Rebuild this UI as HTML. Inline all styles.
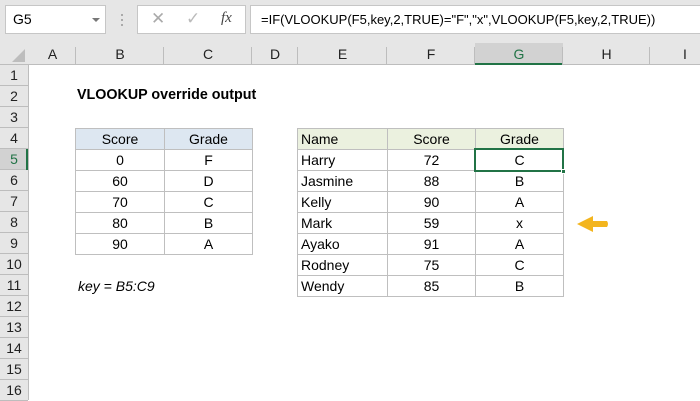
<!DOCTYPE html>
<html><head><style>
*{margin:0;padding:0;box-sizing:border-box}
body{width:700px;height:400px;overflow:hidden;background:#fff;font-family:"Liberation Sans",sans-serif;font-size:14px;color:#000;position:relative}
.a{position:absolute}
.c{position:absolute;display:flex;align-items:center;justify-content:center;font-size:14px}
</style></head><body>
<div class="a" style="left:0;top:0;width:700px;height:43px;background:#e6e6e6"></div>
<div class="a" style="left:5px;top:5px;width:101px;height:29px;background:#fff;border:1px solid #c6c6c6"></div>
<div class="a" style="left:13px;top:11px;font-size:14px">G5</div>
<div class="a" style="left:92px;top:18px;width:0;height:0;border-left:4px solid transparent;border-right:4px solid transparent;border-top:4px solid #777"></div>
<div class="a" style="left:121px;top:14px;width:2px;height:2px;background:#aaa;box-shadow:0 5px #aaa,0 10px #aaa"></div>
<div class="a" style="left:137px;top:5px;width:109px;height:29px;background:#fff;border:1px solid #c6c6c6"></div>
<div class="a" style="left:151px;top:9px;color:#aaa;font-size:17px">✕</div>
<div class="a" style="left:186px;top:9px;color:#bbb;font-size:17px">✓</div>
<div class="a" style="left:221px;top:10px;font-family:'Liberation Serif',serif;font-style:italic;font-size:15px;color:#444">fx</div>
<div class="a" style="left:250px;top:5px;width:460px;height:29px;background:#fff;border:1px solid #c6c6c6"></div>
<div class="a" style="left:261px;top:12px;font-size:13px">=IF(VLOOKUP(F5,key,2,TRUE)="F","x",VLOOKUP(F5,key,2,TRUE))</div>
<div class="a" style="left:0;top:43px;width:700px;height:22px;background:#e6e6e6;border-bottom:1px solid #bdbdbd"></div>
<div class="a" style="left:28px;top:65px;width:1px;height:335px;background:#bdbdbd"></div>
<div class="a" style="left:0;top:65px;width:28px;height:335px;background:#e6e6e6"></div>
<div class="a" style="left:12px;top:49px;width:0;height:0;border-left:13px solid transparent;border-bottom:13px solid #bdbdbd"></div>
<div class="a" style="left:475px;top:43px;width:88px;height:22px;background:#d2d2d2;border-bottom:2px solid #217346"></div>
<div id="cols"></div>
<div id="rows"></div>
<div id="cells"></div>
<div class="a" style="left:77px;top:87px;font-weight:bold;font-size:14.3px">VLOOKUP override output</div>
<div class="a" style="left:78px;top:278px;font-style:italic">key = B5:C9</div>
<div class="a" style="left:474px;top:148px;width:90px;height:24px;border:2px solid #217346"></div>
<div class="a" style="left:561px;top:169px;width:5px;height:5px;background:#217346;border:1px solid #fff"></div>
<svg class="a" style="left:575px;top:214px" width="36" height="20"><path d="M2 10 L18 2 L18 7 L32 7 Q34 10 32 13 L18 13 L18 18 Z" fill="#f3b51e"/></svg>
<script>
var cx=[29,76,164,252,298,387,475,563,650,720],nm="ABCDEFGHI",h="";
for(var i=0;i<9;i++){h+='<div class="c" style="left:'+cx[i]+'px;top:43px;width:'+(cx[i+1]-cx[i])+'px;height:22px;color:'+(i==6?'#217346':'#222')+'">'+nm[i]+'</div>';
h+='<div class="a" style="left:'+(cx[i+1]-1)+'px;top:47px;width:1px;height:18px;background:#bdbdbd"></div>';}
document.getElementById('cols').innerHTML=h;h="";
for(var r=1;r<=16;r++){var t=65+21*(r-1);h+='<div class="c" style="left:0;top:'+t+'px;width:28px;height:21px;'+(r==5?'background:#d2d2d2;color:#217346;':'color:#222;')+'border-bottom:1px solid #bdbdbd">'+r+'</div>';}
h+='<div class="a" style="left:26px;top:149px;width:2px;height:21px;background:#217346"></div>';
document.getElementById('rows').innerHTML=h;h="";
function tbl(x,ws,rows,hb,al){var y=128;for(var r=0;r<rows.length;r++){var xx=x;for(var c=0;c<ws.length;c++){h+='<div class="c" style="left:'+xx+'px;top:'+y+'px;width:'+(ws[c]+1)+'px;height:22px;border:1px solid #bfbfbf;'+(r==0?'background:'+hb+';':'')+(al[c]?'justify-content:flex-start;padding-left:3px;':'')+'">'+rows[r][c]+'</div>';xx+=ws[c];}y+=21;}}
tbl(75,[89,88],[["Score","Grade"],["0","F"],["60","D"],["70","C"],["80","B"],["90","A"]],"#dde7f1",[0,0]);
tbl(297,[90,88,88],[["Name","Score","Grade"],["Harry","72","C"],["Jasmine","88","B"],["Kelly","90","A"],["Mark","59","x"],["Ayako","91","A"],["Rodney","75","C"],["Wendy","85","B"]],"#ebf1df",[1,0,0]);
document.getElementById('cells').innerHTML=h;
</script>
</body></html>
